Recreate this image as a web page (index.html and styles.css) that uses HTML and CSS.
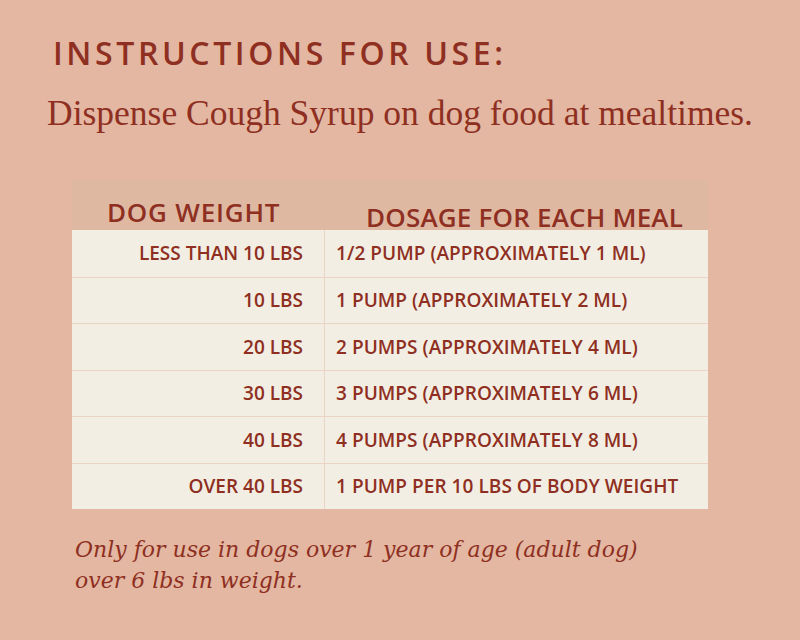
FILE: index.html
```html
<!DOCTYPE html>
<html>
<head>
<meta charset="utf-8">
<link rel="stylesheet" href="styles.css">
</head>
<body>
<div class="page">
  <h1 class="title">INSTRUCTIONS FOR USE:</h1>
  <p class="subtitle">Dispense Cough Syrup on dog food at mealtimes.</p>
  <div class="table">
    <div class="head">
      <div class="h1">DOG WEIGHT</div>
      <div class="h2">DOSAGE FOR EACH MEAL</div>
    </div>
    <div class="body">
      <div class="row"><div class="c1">LESS THAN 10 LBS</div><div class="c2">1/2 PUMP (APPROXIMATELY 1 ML)</div></div>
      <div class="row"><div class="c1">10 LBS</div><div class="c2">1 PUMP (APPROXIMATELY 2 ML)</div></div>
      <div class="row"><div class="c1">20 LBS</div><div class="c2">2 PUMPS (APPROXIMATELY 4 ML)</div></div>
      <div class="row"><div class="c1">30 LBS</div><div class="c2">3 PUMPS (APPROXIMATELY 6 ML)</div></div>
      <div class="row"><div class="c1">40 LBS</div><div class="c2">4 PUMPS (APPROXIMATELY 8 ML)</div></div>
      <div class="row"><div class="c1">OVER 40 LBS</div><div class="c2">1 PUMP PER 10 LBS OF BODY WEIGHT</div></div>
    </div>
  </div>
  <p class="note">Only for use in dogs over 1 year of age (adult dog)<br>over 6 lbs in weight.</p>
</div>
</body>
</html>
```
FILE: styles.css
```css
html, body { margin: 0; padding: 0; }
body {
  background: #e3b7a1;
  width: 800px;
  height: 640px;
  overflow: hidden;
  color: #8e2f22;
}
.page {
  padding: 35px 0 0 0;
}
.title {
  margin: 0 0 0 53px;
  font-family: "Open Sans", sans-serif;
  font-weight: 600;
  font-size: 32px;
  letter-spacing: 3.6px;
  line-height: 36px;
}
.subtitle {
  margin: 22px 0 0 47px;
  font-family: "Liberation Serif", serif;
  font-size: 35.5px;
  line-height: 40px;
}
.table {
  margin: 47px 0 0 72px;
  width: 636px;
}
.head {
  background: #dfb8a2;
  height: 50px;
  display: flex;
  font-family: "Open Sans", sans-serif;
  font-weight: 600;
}
.h1 {
  width: 253px;
  padding-left: 35px;
  padding-top: 17px;
  font-size: 26px;
  line-height: 30px;
  letter-spacing: 0.8px;
  box-sizing: border-box;
}
.h2 {
  padding-left: 41px;
  padding-top: 22px;
  font-size: 26px;
  line-height: 30px;
  letter-spacing: 0.2px;
}
.body {
  background: #f3eee3;
}
.row {
  display: flex;
  height: 46.5px;
  align-items: center;
  border-top: 1px solid #ecd3c6;
  box-sizing: border-box;
  font-family: "Open Sans", sans-serif;
  font-weight: 600;
  font-size: 19px;
}
.row:first-child { border-top: none; }
.c1 {
  width: 253px;
  height: 100%;
  box-sizing: border-box;
  padding-right: 21px;
  border-right: 1px solid #ecd3c6;
  display: flex;
  align-items: center;
  justify-content: flex-end;
}
.c2 {
  padding-left: 11px;
  letter-spacing: 0.05px;
}
.note {
  margin: 25px 0 0 75px;
  font-family: "DejaVu Serif", serif;
  font-style: italic;
  font-size: 22px;
  line-height: 31px;
}
```
